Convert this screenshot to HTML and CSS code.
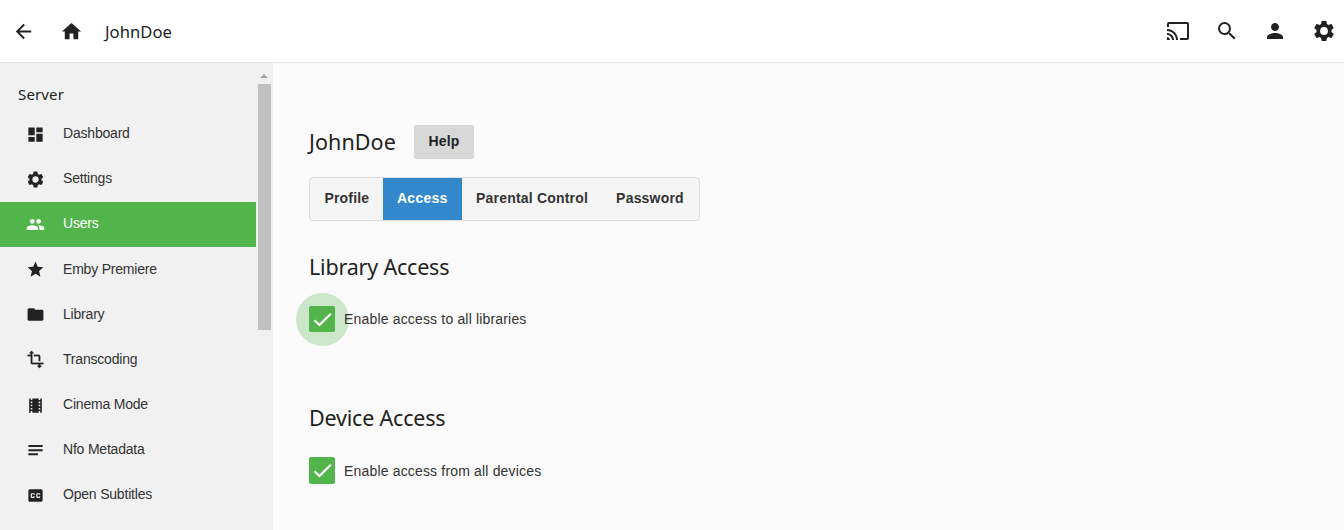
FILE: index.html
```html
<!DOCTYPE html>
<html lang="en">
<head>
<meta charset="utf-8">
<title>JohnDoe</title>
<link rel="stylesheet" href="styles.css">
</head>
<body>
<header class="topbar">
  <svg class="icon back" viewBox="0 0 24 24"><path d="M20 11H7.83l5.59-5.59L12 4l-8 8 8 8 1.41-1.41L7.83 13H20v-2z"/></svg>
  <svg class="icon home" viewBox="0 0 24 24"><path d="M10 20v-6h4v6h5v-8h3L12 3 2 12h3v8z"/></svg>
  <span class="page-name">JohnDoe</span>
  <nav class="actions">
    <svg class="icon" viewBox="0 0 24 24"><path d="M21 3H3c-1.100 0-2 .9-2 2v3h2V5h18v14h-7v2h7c1.100 0 2-.9 2-2V5c0-1.100-.9-2-2-2zM1 18v3h3c0-1.660-1.340-3-3-3zm0-4v2c2.760 0 5 2.240 5 5h2c0-3.870-3.130-7-7-7zm0-4v2c4.970 0 9 4.030 9 9h2c0-6.080-4.930-11-11-11z"/></svg>
    <svg class="icon" viewBox="0 0 24 24"><path d="M15.500 14h-.79l-.28-.27A6.471 6.471 0 0 0 16 9.500 6.500 6.500 0 1 0 9.500 16c1.610 0 3.090-.59 4.230-1.570l.27.28v.79l5 4.990L20.490 19l-4.990-5zm-6 0C7.010 14 5 11.990 5 9.500S7.010 5 9.500 5 14 7.010 14 9.500 11.990 14 9.500 14z"/></svg>
    <svg class="icon" viewBox="0 0 24 24"><path d="M12 12c2.210 0 4-1.790 4-4s-1.790-4-4-4-4 1.790-4 4 1.790 4 4 4zm0 2c-2.670 0-8 1.340-8 4v2h16v-2c0-2.660-5.330-4-8-4z"/></svg>
    <svg class="icon" viewBox="0 0 24 24"><path d="M19.430 12.980c.04-.32.07-.64.07-.98s-.03-.66-.07-.98l2.110-1.650c.19-.15.24-.42.12-.64l-2-3.460c-.12-.22-.39-.3-.61-.22l-2.490 1c-.52-.4-1.080-.73-1.690-.98l-.38-2.650C14.460 2.180 14.250 2 14 2h-4c-.25 0-.46.18-.49.42l-.38 2.650c-.61.25-1.170.59-1.690.98l-2.490-1c-.23-.09-.49 0-.61.22l-2 3.460c-.13.22-.07.49.12.64l2.110 1.650c-.04.32-.07.65-.07.98s.03.66.07.98l-2.110 1.650c-.19.15-.24.42-.12.64l2 3.460c.12.22.39.3.61.22l2.490-1c.52.4 1.080.73 1.690.98l.38 2.650c.03.24.24.42.49.42h4c.25 0 .46-.18.49-.42l.38-2.650c.61-.25 1.170-.59 1.690-.98l2.490 1c.23.09.49 0 .61-.22l2-3.460c.12-.22.07-.49-.12-.64l-2.110-1.650zM12 15.900A3.900 3.900 0 1 1 12 8.100a3.900 3.900 0 0 1 0 7.800z"/></svg>
  </nav>
</header>
<div class="body">
  <aside class="sidebar">
    <div class="menu">
      <h3 class="menu-title">Server</h3>
      <a class="item"><svg class="icon" viewBox="0 0 24 24"><path d="M3 13h8V3H3v10zm0 8h8v-6H3v6zm10 0h8V11h-8v10zm0-18v6h8V3h-8z"/></svg><span>Dashboard</span></a>
      <a class="item"><svg class="icon" viewBox="0 0 24 24"><path d="M19.430 12.980c.04-.32.07-.64.07-.98s-.03-.66-.07-.98l2.110-1.650c.19-.15.24-.42.12-.64l-2-3.460c-.12-.22-.39-.3-.61-.22l-2.490 1c-.52-.4-1.080-.73-1.690-.98l-.38-2.650C14.460 2.180 14.250 2 14 2h-4c-.25 0-.46.18-.49.42l-.38 2.650c-.61.25-1.170.59-1.690.98l-2.490-1c-.23-.09-.49 0-.61.22l-2 3.460c-.13.22-.07.49.12.64l2.110 1.650c-.04.32-.07.65-.07.98s.03.66.07.98l-2.110 1.650c-.19.15-.24.42-.12.64l2 3.460c.12.22.39.3.61.22l2.490-1c.52.4 1.080.73 1.690.98l.38 2.650c.03.24.24.42.49.42h4c.25 0 .46-.18.49-.42l.38-2.650c.61-.25 1.170-.59 1.690-.98l2.490 1c.23.09.49 0 .61-.22l2-3.460c.12-.22.07-.49-.12-.64l-2.110-1.650zM12 16A4 4 0 1 1 12 8a4 4 0 0 1 0 8z"/></svg><span>Settings</span></a>
      <a class="item selected"><svg class="icon" viewBox="0 0 24 24"><path d="M16 11c1.660 0 2.990-1.340 2.990-3S17.660 5 16 5s-3 1.340-3 3 1.340 3 3 3zm-8 0c1.660 0 2.990-1.340 2.990-3S9.660 5 8 5 5 6.340 5 8s1.340 3 3 3zm0 2c-2.330 0-7 1.170-7 3.500V19h14v-2.500C15 14.170 10.330 13 8 13zm8 0c-.29 0-.62.02-.97.05 1.160.84 1.970 1.970 1.970 3.450V19h6v-2.500c0-2.330-4.670-3.500-7-3.500z"/></svg><span>Users</span></a>
      <a class="item"><svg class="icon" viewBox="0 0 24 24"><path d="M12 17.270 18.180 21l-1.640-7.030L22 9.240l-7.190-.61L12 2 9.190 8.630 2 9.240l5.460 4.730L5.820 21z"/></svg><span>Emby Premiere</span></a>
      <a class="item"><svg class="icon" viewBox="0 0 24 24"><path d="M10 4H4c-1.100 0-1.990.9-1.990 2L2 18c0 1.100.9 2 2 2h16c1.100 0 2-.9 2-2V8c0-1.100-.9-2-2-2h-8l-2-2z"/></svg><span>Library</span></a>
      <a class="item"><svg class="icon" viewBox="0 0 24 24"><path d="M22 18v-2H8V4h2L7 1 4 4h2v2H2v2h4v8c0 1.100.9 2 2 2h8v2h-2l3 3 3-3h-2v-2h4zM10 8h6v6h2V8c0-1.100-.9-2-2-2h-6v2z" stroke="currentColor" stroke-width=".3"/></svg><span>Transcoding</span></a>
      <a class="item"><svg class="icon" viewBox="0 0 24 24"><path d="M18 3v2h-2V3H8v2H6V3H4v18h2v-2h2v2h8v-2h2v2h2V3h-2zM8 17H6v-2h2v2zm0-4H6v-2h2v2zm0-4H6V7h2v2zm10 8h-2v-2h2v2zm0-4h-2v-2h2v2zm0-4h-2V7h2v2z"/></svg><span>Cinema Mode</span></a>
      <a class="item"><svg class="icon" viewBox="0 0 24 24"><path d="M3 5.200h18v2.500H3zM3 10.300h18v2.500H3zM3 15.400h12v2.500H3z"/></svg><span>Nfo Metadata</span></a>
      <a class="item"><svg class="icon" viewBox="0 0 24 24"><path d="M19 4H5c-1.110 0-2 .9-2 2v12c0 1.100.89 2 2 2h14c1.100 0 2-.9 2-2V6c0-1.100-.9-2-2-2zm-8 7H9.500v-.5h-2v3h2V13H11v1c0 .55-.45 1-1 1H7c-.55 0-1-.45-1-1v-4c0-.55.45-1 1-1h3c.55 0 1 .45 1 1v1zm7 0h-1.500v-.5h-2v3h2V13H18v1c0 .55-.45 1-1 1h-3c-.55 0-1-.45-1-1v-4c0-.55.45-1 1-1h3c.55 0 1 .45 1 1v1z"/></svg><span>Open Subtitles</span></a>
    </div>
    <div class="scrollbar"><div class="scroll-up"></div><div class="scroll-thumb"></div></div>
  </aside>
  <main class="content">
    <div class="title-row"><h1 class="heading user-heading">JohnDoe</h1><button class="help">Help</button></div>
    <div class="tabs"><a class="tab">Profile</a><a class="tab active">Access</a><a class="tab">Parental Control</a><a class="tab">Password</a></div>
    <section class="section library">
      <h2 class="heading">Library Access</h2>
      <label class="check"><span class="box focused"><svg viewBox="0 0 26 26"><path d="M5.500 14.200 10.500 19 21.800 7.800"/></svg></span><span class="check-label">Enable access to all libraries</span></label>
    </section>
    <section class="section">
      <h2 class="heading">Device Access</h2>
      <label class="check"><span class="box tall"><svg viewBox="0 0 26 26"><path d="M5.500 14.200 10.500 19 21.800 7.800"/></svg></span><span class="check-label">Enable access from all devices</span></label>
    </section>
  </main>
</div>
</body>
</html>
```
FILE: styles.css
```css
* { box-sizing: border-box; }
body { margin: 0; height: 530px; overflow: hidden; display: flex; flex-direction: column; background: #fafafa; color: #222; font-family: "Liberation Sans", Arial, sans-serif; }
h1, h2, h3 { margin: 0; font-weight: 400; }
.icon { display: block; fill: currentColor; flex: none; }
.topbar { height: 63px; flex: none; display: flex; align-items: center; padding: 0 8px 0 12px; background: #fff; border-bottom: 1px solid #e0e0e0; }
.back { width: 23px; height: 23px; }
.home { width: 23px; height: 23px; margin-left: 25px; }
.page-name { margin-left: 22px; padding-top: 2px; font: 16.600px/24px "Noto Sans", sans-serif; letter-spacing: .05px; }
.actions { margin-left: auto; display: flex; gap: 24.600px; }
.actions .icon { width: 24px; height: 24px; }
.body { flex: 1; min-height: 0; display: flex; }
.sidebar { width: 273px; flex: none; display: flex; background: #f1f1f1; overflow: hidden; }
.menu { width: 256px; padding-top: 19px; }
.menu-title { height: 29.600px; padding-left: 18px; font: 15px/24px "Noto Sans", sans-serif; letter-spacing: .15px; }
.item { display: flex; align-items: center; height: 45.150px; padding-left: 26px; font-size: 14px; letter-spacing: -.2px; color: #333; }
.item .icon { width: 19px; height: 19px; margin-right: 18px; color: #222; }
.item span { padding-bottom: 2px; }
.item.selected, .selected .icon { color: #fff; }
.selected { background: #52b54b; }
.scrollbar { width: 17px; padding: 11px 2px 0; }
.scroll-up { width: 0; height: 4px; margin: 0 0 6px 2px; border: solid transparent; border-width: 0 4px 4px; border-bottom-color: #a3a3a3; }
.scroll-thumb { width: 13px; height: 246px; background: #c1c1c1; }
.content { flex: 1; padding: 62px 36px 0; }
.heading { font: 21.500px/30px "Noto Sans", sans-serif; letter-spacing: -.2px; }
.user-heading { width: 87px; letter-spacing: .08px; }
.title-row { display: flex; align-items: center; height: 34px; }
.help { width: 60px; height: 34px; margin-left: 18px; padding: 0 0 2px; border: 0; border-radius: 2px; background: #d8d8d8; color: #222; font: bold 14px "Liberation Sans", Arial, sans-serif; letter-spacing: .2px; }
.tabs { display: flex; width: 391px; height: 44px; margin-top: 18px; border: 1px solid #ddd; border-radius: 4px; background: #f5f5f5; }
.tab { display: flex; align-items: center; padding: 0 14px 2px; font-size: 14px; font-weight: 700; letter-spacing: .2px; color: #333; white-space: nowrap; }
.tab:first-child { width: 73px; padding-left: 14.500px; letter-spacing: .16px; }
.tab.active { width: 79px; letter-spacing: .25px; background: #38c; color: #fff; }
.section { padding-top: 31px; }
.library { height: 151px; }
.check { display: flex; align-items: center; height: 26px; margin-top: 24px; }
.box { position: relative; width: 26px; height: 26px; border-radius: 2px; background: #52b54b; }
.tall { height: 27px; }
.box svg { position: relative; display: block; fill: none; stroke: #fff; stroke-width: 2.200; }
.focused::before { content: ""; position: absolute; inset: -13.500px; border-radius: 50%; background: rgba(82, 181, 75, .28); }
.check-label { position: relative; margin-left: 9px; font-size: 14px; letter-spacing: .17px; color: #333; }
.tall + .check-label { padding-top: 2px; }
```
